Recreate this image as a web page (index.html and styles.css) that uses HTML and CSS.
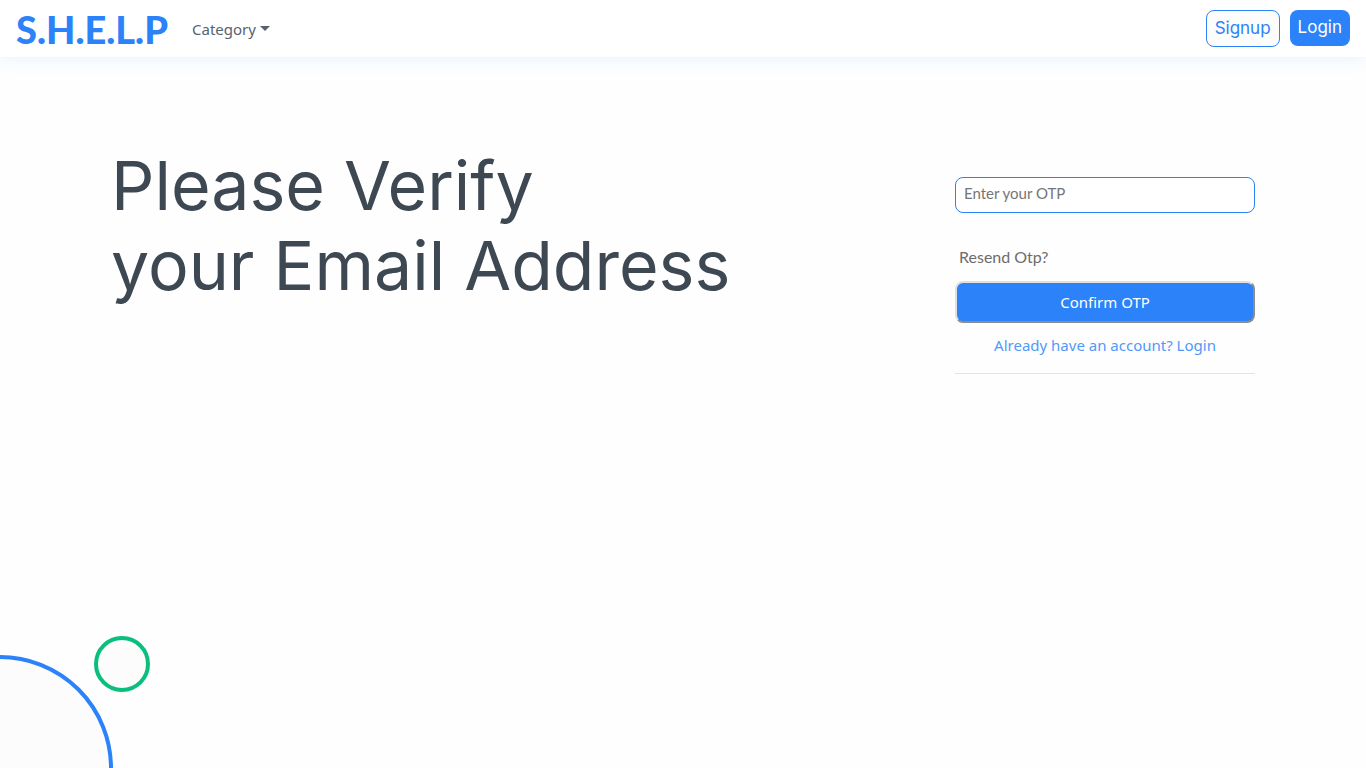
FILE: index.html
```html
<!DOCTYPE html>
<html lang="en">
<head>
  <meta charset="utf-8">
  <meta name="viewport" content="width=device-width, initial-scale=1">
  <title>S.H.E.L.P</title>
  <link rel="stylesheet" href="styles.css">
</head>
<body>
  <header class="navbar">
    <a class="brand" href="#">S.H.E.L.P</a>
    <button class="category" type="button" aria-haspopup="true">Category</button>
    <nav class="account">
      <a class="btn btn-outline" href="#">Signup</a>
      <a class="btn btn-solid" href="#">Login</a>
    </nav>
  </header>
  <main class="verify">
    <h1 class="title">Please Verify<br>your Email Address</h1>
    <form class="otp-form">
      <input class="otp-input" type="text" placeholder="Enter your OTP" aria-label="Enter your OTP">
      <a class="resend" href="#">Resend Otp?</a>
      <button class="confirm" type="button">Confirm OTP</button>
      <a class="login-link" href="#">Already have an account? Login</a>
      <hr class="divider">
    </form>
  </main>
  <svg class="circles" width="150" height="132" viewBox="0 0 150 132" aria-hidden="true">
    <circle cx="0" cy="132" r="111" fill="#fcfcfc" stroke="#2c82f8" stroke-width="4"/>
    <circle cx="122" cy="28" r="26" fill="#fcfcfc" stroke="#0abf7d" stroke-width="4"/>
  </svg>
</body>
</html>
```
FILE: styles.css
```css
* {
  box-sizing: border-box;
}

body {
  display: flex;
  flex-direction: column;
  min-height: 100vh;
  margin: 0;
  background: #fefefe;
  color: #3d4852;
  font-family: Inter, sans-serif;
  font-size: 16px;
}

a {
  text-decoration: none;
}

.navbar {
  display: flex;
  align-items: center;
  padding: 10px 16px;
  background: #fff;
  box-shadow: 0 2px 16px rgba(44, 130, 248, 0.1);
}

.brand {
  color: #2c82f8;
  font-family: Lato, sans-serif;
  font-size: 38px;
  font-weight: 900;
  line-height: 36px;
}

.category {
  display: flex;
  align-items: center;
  gap: 4px;
  margin-left: 24px;
  padding: 0;
  border: 0;
  background: none;
  color: #56636f;
  font-family: "Noto Sans", sans-serif;
  font-size: 15px;
  line-height: 24px;
}

.category::after {
  content: "";
  border: 5px solid transparent;
  border-top-color: #56636f;
  border-bottom: 0;
}

.account {
  display: flex;
  align-items: flex-start;
  gap: 10px;
  margin-left: auto;
}

.btn {
  border-radius: 8px;
  font-size: 17px;
  line-height: 24px;
}

.btn-outline {
  padding: 5px 8px 6px;
  border: 1px solid #2c82f8;
  background: #fcfcfc;
  color: #2c82f8;
}

.btn-solid {
  padding: 5px 8px 7px;
  background: #2c82f8;
  color: #fff;
}

.verify {
  display: flex;
  flex: 1;
  justify-content: space-between;
  align-items: flex-start;
  padding: 88px 111px 0;
}

.title {
  margin: 0;
  font-size: 68px;
  font-weight: 400;
  line-height: 80px;
}

.otp-form {
  display: flex;
  flex-direction: column;
  width: 300px;
  padding-top: 32px;
}

.otp-input {
  height: 36px;
  padding: 0 8px 4px;
  border: 1px solid #2c82f8;
  border-radius: 8px;
  background: #fff;
  color: #3d4852;
  font-family: Lato, sans-serif;
  font-size: 15px;
}

.otp-input::placeholder {
  color: #757575;
}

.resend {
  align-self: flex-start;
  margin: 32px 4px 12px;
  color: #6c6c6c;
  font-family: Lato, sans-serif;
  font-size: 16px;
  line-height: 24px;
}

.confirm {
  height: 42px;
  border: 2px outset #e0e0e0;
  border-radius: 8px;
  background: #2c82f8;
  color: #fff;
  font-family: "Noto Sans", sans-serif;
  font-size: 15px;
}

.login-link {
  margin: 10px 0 16px;
  color: #5099f9;
  font-family: "Noto Sans", sans-serif;
  font-size: 15px;
  line-height: 24px;
  text-align: center;
}

.divider {
  width: 100%;
  margin: 0;
  border: 0;
  border-top: 1px solid #e3e3e3;
}

.circles {
  display: block;
}
```
